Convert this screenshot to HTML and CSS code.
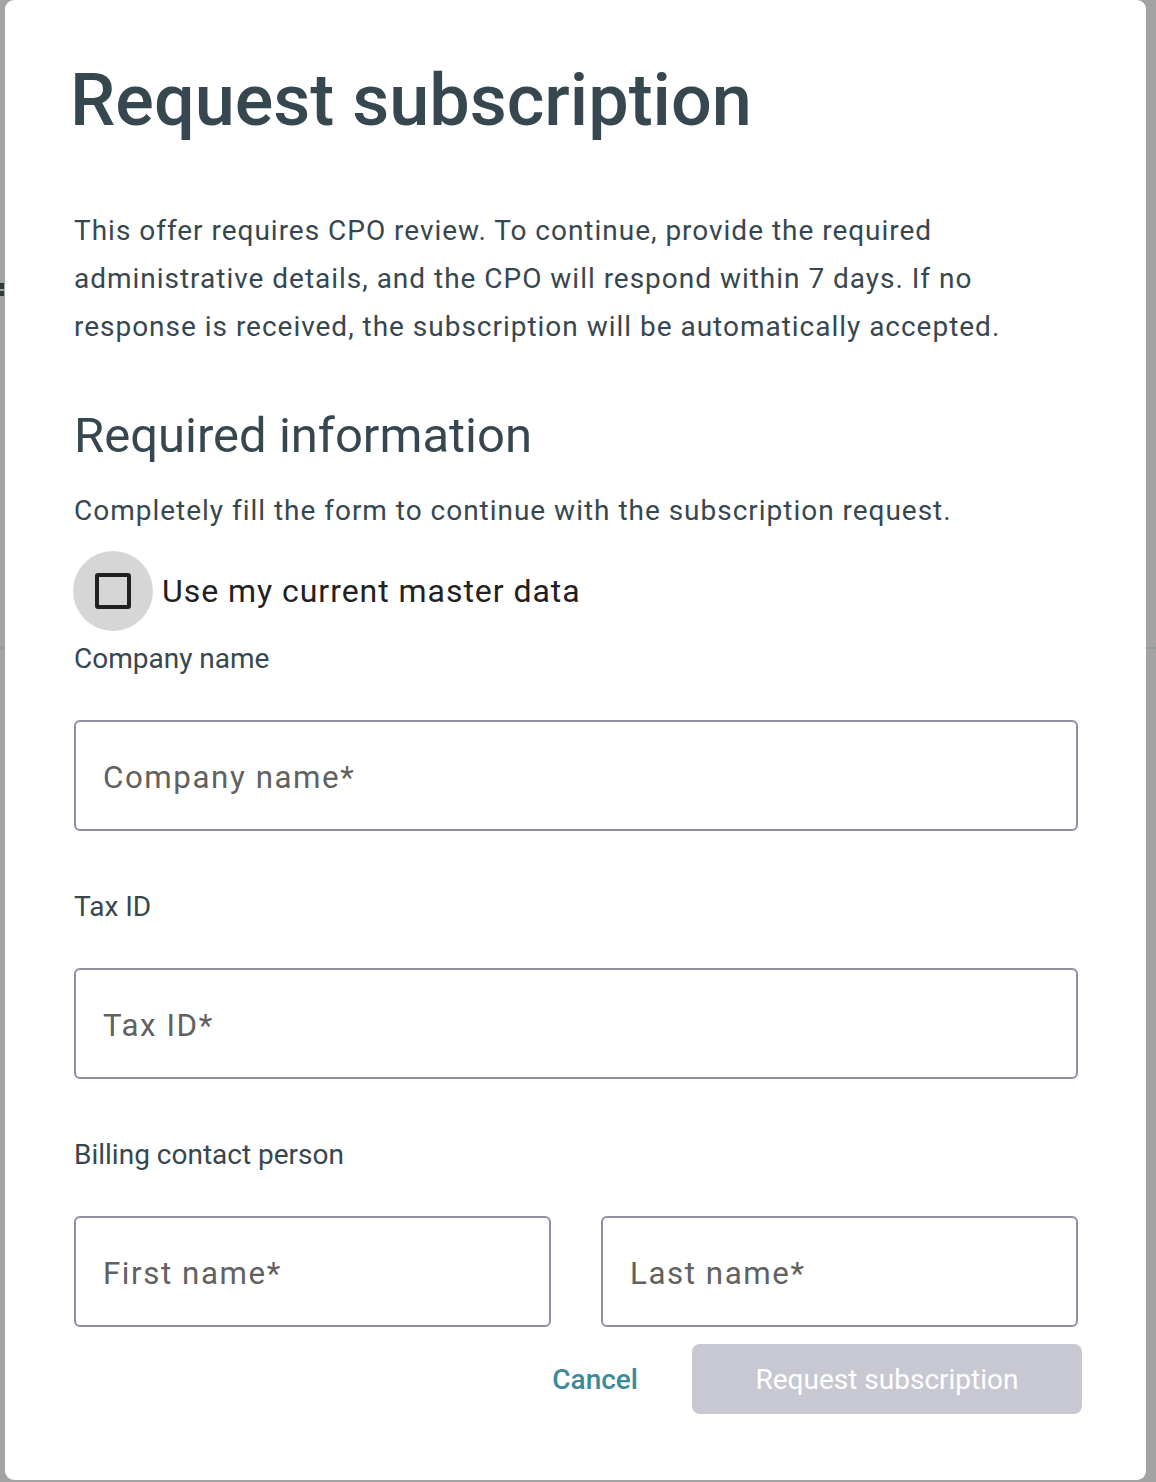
FILE: index.html
```html
<!DOCTYPE html>
<html lang="en">
<head>
<meta charset="utf-8">
<title>Request subscription</title>
<link rel="stylesheet" href="styles.css">
</head>
<body>
<div class="page">
  <div class="page-top">
    <span class="page-mark"></span>
  </div>
</div>
<div class="modal">
  <h1 class="title">Request subscription</h1>
  <p class="intro">This offer requires CPO review. To continue, provide the required administrative details, and the CPO will respond within 7 days. If no response is received, the subscription will be automatically accepted.</p>
  <h2 class="section-title">Required information</h2>
  <p class="hint">Completely fill the form to continue with the subscription request.</p>
  <label class="check-row">
    <span class="check-ripple"><span class="check-box"></span></span>
    <span class="check-label">Use my current master data</span>
  </label>
  <div class="field">
    <div class="field-label">Company name</div>
    <div class="input"><span class="placeholder">Company name*</span></div>
  </div>
  <div class="field">
    <div class="field-label">Tax ID</div>
    <div class="input"><span class="placeholder">Tax ID*</span></div>
  </div>
  <div class="field">
    <div class="field-label">Billing contact person</div>
    <div class="input-pair">
      <div class="input"><span class="placeholder">First name*</span></div>
      <div class="input"><span class="placeholder">Last name*</span></div>
    </div>
  </div>
  <div class="actions">
    <button class="btn-text">Cancel</button>
    <button class="btn-primary" disabled>Request subscription</button>
  </div>
</div>
</body>
</html>
```
FILE: styles.css
```css
html, body {
  margin: 0;
  padding: 0;
}
body {
  background: #a3a3a3;
  font-family: Roboto, "Noto Sans", sans-serif;
  color: #37474f;
  width: 1156px;
  height: 1482px;
  overflow: hidden;
  position: relative;
}
.page-top {
  height: 649px;
  border-bottom: 2px solid #8e9c9c;
  padding-top: 283px;
  box-sizing: border-box;
}
.page-mark {
  display: block;
  width: 4px;
  height: 13px;
  background: linear-gradient(#2f3a3d 0 45%, transparent 45% 60%, #2f3a3d 60% 100%);
}
.modal {
  position: absolute;
  left: 5px;
  top: 0;
  width: 1141px;
  height: 1480px;
  box-sizing: border-box;
  background: #fff;
  border-radius: 9px;
  padding: 61px 68px 0 69px;
}
.title {
  margin: 0 0 0 -4px;
  font-size: 72px;
  line-height: 80px;
  font-weight: 500;
  color: #37474f;
}
.intro {
  margin: 66px 0 0;
  font-size: 28px;
  line-height: 48px;
  letter-spacing: 0.035em;
}
.section-title {
  margin: 55px 0 0;
  font-size: 49px;
  line-height: 60px;
  font-weight: 400;
}
.hint {
  margin: 21px 0 0;
  font-size: 28px;
  line-height: 48px;
  letter-spacing: 0.035em;
}
.check-row {
  margin-top: 16px;
  display: flex;
  align-items: center;
  height: 80px;
  margin-left: -1px;
}
.check-ripple {
  width: 80px;
  height: 80px;
  border-radius: 50%;
  background: #d6d6d6;
  display: flex;
  align-items: center;
  justify-content: center;
}
.check-box {
  width: 28px;
  height: 28px;
  border: 4px solid #212121;
  border-radius: 3px;
}
.check-label {
  margin-left: 9px;
  font-size: 32px;
  color: #212121;
  letter-spacing: 0.03em;
}
.field {
  margin-top: 12px;
}
.field + .field {
  margin-top: 60px;
}
.field-label {
  font-size: 28px;
  line-height: 32px;
}
.input {
  margin-top: 45px;
  height: 111px;
  box-sizing: border-box;
  border: 2px solid #8e8fa3;
  border-radius: 6px;
  display: flex;
  align-items: center;
  padding: 3px 0 0 27px;
}
.placeholder {
  font-size: 31.3px;
  color: #616161;
  letter-spacing: 0.05em;
}
.input-pair {
  display: grid;
  grid-template-columns: 1fr 1fr;
  gap: 50px;
}
.actions {
  margin-top: 17px;
  margin-right: -4px;
  display: flex;
  justify-content: flex-end;
  align-items: center;
}
.btn-text {
  background: none;
  border: none;
  font-family: inherit;
  font-size: 28px;
  font-weight: 500;
  color: #3d8a99;
  padding: 0;
  margin-right: 54px;
}
.btn-primary {
  width: 390px;
  height: 70px;
  border: none;
  border-radius: 8px;
  background: #c8c8d2;
  color: #fff;
  font-family: inherit;
  font-size: 28px;
  font-weight: 400;
}
```
